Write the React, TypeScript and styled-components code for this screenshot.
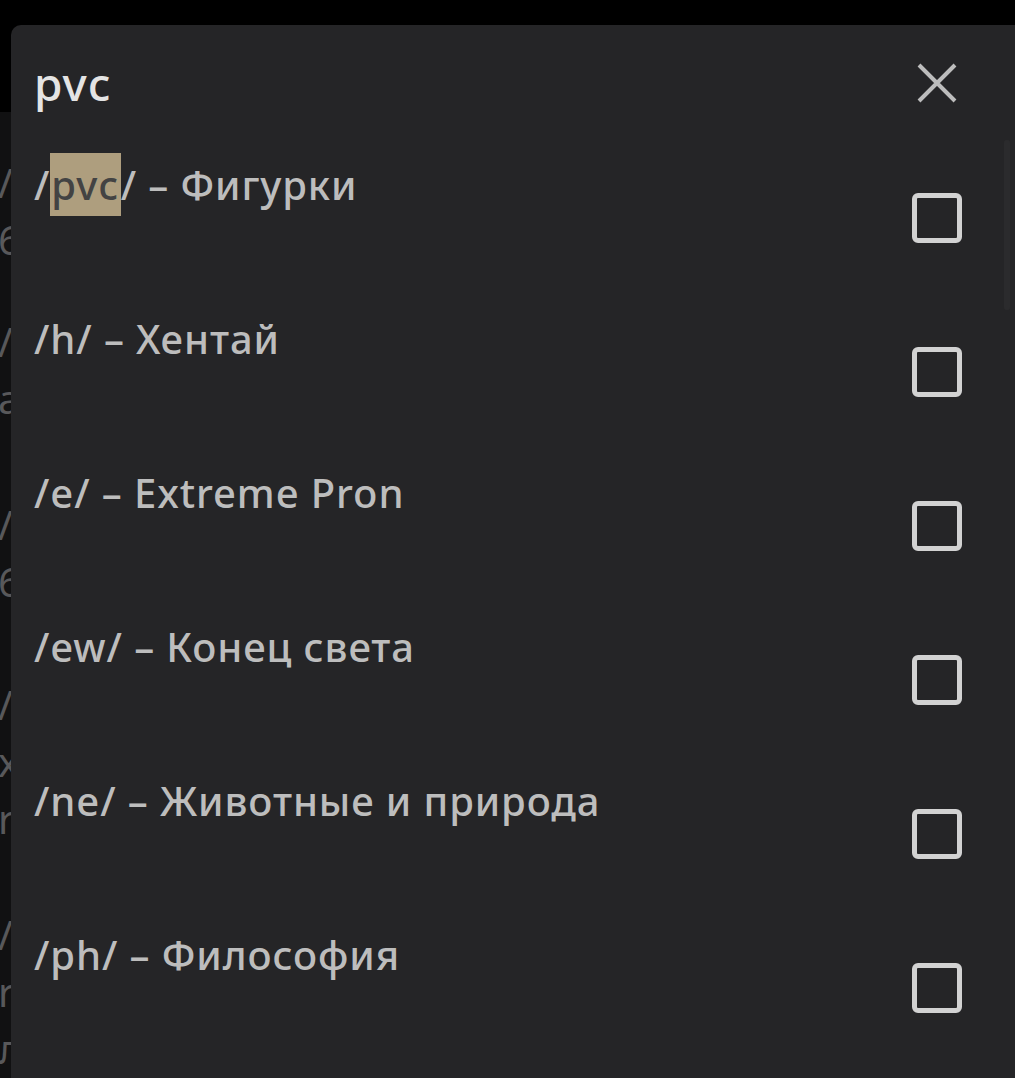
import React, { FC } from "react";
import styled, { createGlobalStyle } from "styled-components";

type Board = {
  code: string;
  title: string;
};

const boards: Board[] = [
  { code: "pvc", title: "Фигурки" },
  { code: "h", title: "Хентай" },
  { code: "e", title: "Extreme Pron" },
  { code: "ew", title: "Конец света" },
  { code: "ne", title: "Животные и природа" },
  { code: "ph", title: "Философия" },
];

// the page under the dialog, only its first letters peek out
const behind: { gap: number; lines: string[] }[] = [
  { gap: 154, lines: ["/a/ – Аниме", "6 постов"] },
  { gap: 45, lines: ["/b/ – Бред", "a"] },
  { gap: 69, lines: ["/c/ – Комиксы", "6 постов"] },
  { gap: 66, lines: ["/d/ – Дискуссии", "x", "r"] },
  { gap: 59, lines: ["/f/ – Флейм", "r", "л"] },
];

const query = "pvc";

const Highlighted: FC<{ text: string }> = ({ text }) => {
  const i = text.indexOf(query);
  if (i < 0) return <>{text}</>;
  return (
    <>
      {text.slice(0, i)}
      <Mark>{query}</Mark>
      {text.slice(i + query.length)}
    </>
  );
};

const App: FC = () => {
  return (
    <>
      <GlobalStyle />
      <Page>
        <AppBar />
        <BackList>
          {behind.map((item, i) => (
            <BackItem key={i} $gap={item.gap}>
              {item.lines.map((l, j) => (
                <BackLine key={j}>{l}</BackLine>
              ))}
            </BackItem>
          ))}
        </BackList>

        <Dialog>
          <Header>
            <Title>{query}</Title>
            <CloseButton aria-label="close">
              <svg width="40" height="40" viewBox="0 0 40 40">
                <path
                  d="M2 2 L38 38 M38 2 L2 38"
                  stroke="#bdbdbd"
                  strokeWidth="4"
                  fill="none"
                />
              </svg>
            </CloseButton>
          </Header>
          <List>
            {boards.map((b) => (
              <Row key={b.code}>
                <Label>
                  <Highlighted text={`/${b.code}/ – ${b.title}`} />
                </Label>
                <Check />
              </Row>
            ))}
          </List>
          <ScrollThumb />
        </Dialog>
      </Page>
    </>
  );
};

const GlobalStyle = createGlobalStyle`
  html, body {
    margin: 0;
    padding: 0;
    background: #111112;
    overflow: hidden;
  }

  body {
    font-family: "Noto Sans", "Open Sans", sans-serif;
  }
`;

const Page = styled.div`
  position: relative;
  width: 1015px;
  height: 1078px;
  overflow: hidden;
  background: #111112;
`;

const AppBar = styled.div`
  position: absolute;
  left: 0;
  top: 0;
  right: 0;
  height: 112px;
  background: #000;
`;

const BackList = styled.div`
  display: flex;
  flex-direction: column;
  width: 11px;
  overflow: hidden;
`;

const BackItem = styled.div<{ $gap: number }>`
  display: flex;
  flex-direction: column;
  margin-top: ${(p) => p.$gap}px;
`;

const BackLine = styled.div`
  font-size: 40px;
  line-height: 57px;
  color: #58585a;
  white-space: nowrap;
  margin-left: -2px;
`;

const Dialog = styled.div`
  position: absolute;
  left: 11px;
  top: 25px;
  right: -12px;
  bottom: -12px;
  background: #252527;
  border-radius: 10px;
  display: flex;
  flex-direction: column;
`;

const Header = styled.div`
  display: flex;
  align-items: center;
  justify-content: space-between;
  height: 116px;
  padding: 0 65px 0 23px;
`;

const Title = styled.h1`
  margin: 0;
  font-size: 46px;
  font-weight: 500;
  letter-spacing: 1px;
  color: #e4e4e4;
  line-height: 52px;
`;

const CloseButton = styled.button`
  display: flex;
  align-items: center;
  justify-content: center;
  width: 50px;
  height: 50px;
  padding: 0;
  border: none;
  background: transparent;
`;

const List = styled.div`
  display: flex;
  flex-direction: column;
`;

const Row = styled.div`
  display: flex;
  align-items: center;
  justify-content: space-between;
  height: 154px;
  padding: 0 65px 0 23px;
`;

const Label = styled.div`
  align-self: flex-start;
  padding-top: 21px;
  font-size: 40px;
  line-height: 46px;
  font-weight: 500;
  letter-spacing: 0.9px;
  color: #bdbdbd;
  white-space: nowrap;
`;

const Mark = styled.span`
  background: #ae9e7e;
  color: #434343;
  padding: 4px 2px 4px 1px;
`;

const Check = styled.div`
  width: 50px;
  height: 50px;
  box-sizing: border-box;
  border: 5px solid #d2d2d2;
  border-radius: 6px;
  flex-shrink: 0;
`;

const ScrollThumb = styled.div`
  position: absolute;
  right: 17px;
  top: 115px;
  width: 6px;
  height: 170px;
  background: rgba(255, 255, 255, 0.03);
  border-radius: 3px;
`;

export default App;
